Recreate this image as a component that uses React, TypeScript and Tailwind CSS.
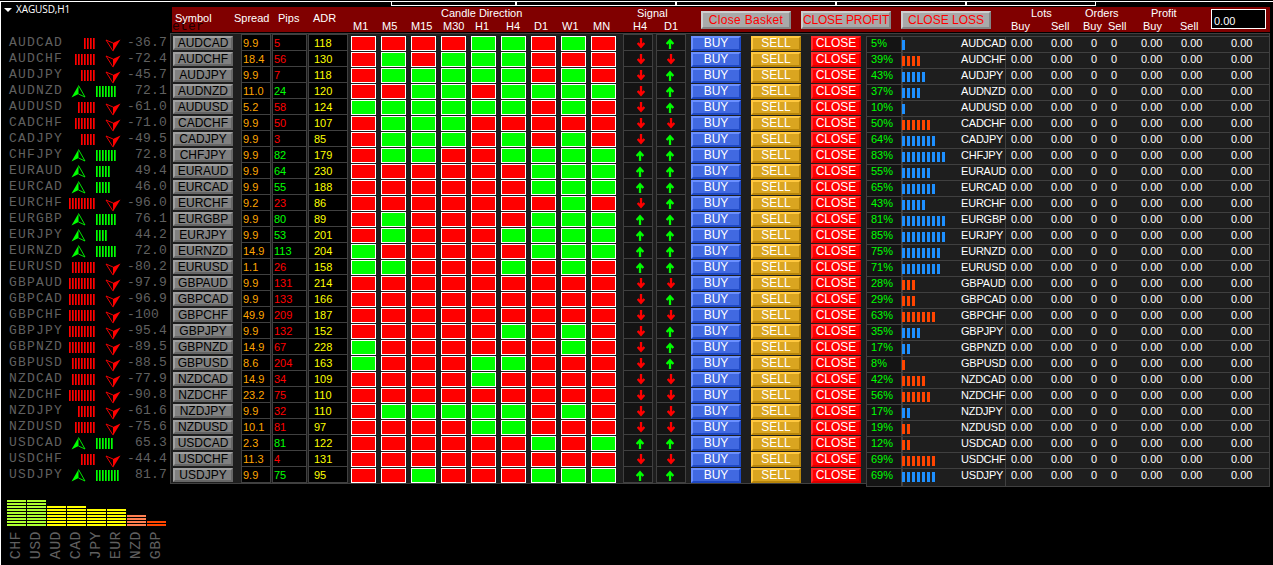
type Row = [
  symbol: string,
  strength: string,
  ticks: number,
  spread: string,
  pips: string,
  adr: string,
  candles: string,
  signals: string,
  percent: number,
  side: "B" | "S",
]

// candles: M1..MN, R = bearish, G = bullish. signals: H4 and D1, u = up, d = down
const rows: Row[] = [
  ["AUDCAD", "-36.7", 4, "9.9", "5", "118", "RRRRGGRGR", "du", 5, "B"],
  ["AUDCHF", "-72.4", 7, "18.4", "56", "130", "RGRGGGRRR", "dd", 39, "S"],
  ["AUDJPY", "-45.7", 5, "9.9", "7", "118", "RGGGGGRGR", "du", 43, "B"],
  ["AUDNZD", "72.1", 7, "11.0", "24", "120", "RRGGRGGGG", "du", 37, "B"],
  ["AUDUSD", "-61.0", 6, "5.2", "58", "124", "GGGGGGRGR", "du", 9.9, "B"],
  ["CADCHF", "-71.0", 7, "9.9", "50", "107", "RGGGRRRRR", "dd", 50, "S"],
  ["CADJPY", "-49.5", 5, "9.9", "3", "85", "RGGGRGRGR", "du", 64, "B"],
  ["CHFJPY", "72.8", 7, "9.9", "82", "179", "RGGRRGGGG", "uu", 83, "B"],
  ["EURAUD", "49.4", 5, "9.9", "64", "230", "RRRRRRGGG", "uu", 55, "B"],
  ["EURCAD", "46.0", 5, "9.9", "55", "188", "RRRRRRGGG", "uu", 65, "B"],
  ["EURCHF", "-96.0", 9, "9.2", "23", "86", "RRRRRRRGR", "du", 43, "B"],
  ["EURGBP", "76.1", 7, "9.9", "80", "89", "RGRRRRGGG", "uu", 81, "B"],
  ["EURJPY", "44.2", 4, "9.9", "53", "201", "RGRRRGGGG", "uu", 85, "B"],
  ["EURNZD", "72.0", 7, "14.9", "113", "204", "GRRRRRGGG", "uu", 75, "B"],
  ["EURUSD", "-80.2", 8, "1.1", "26", "158", "GGRRRGRGR", "uu", 71, "B"],
  ["GBPAUD", "-97.9", 9, "9.9", "131", "214", "RRRRRRRRR", "dd", 28, "S"],
  ["GBPCAD", "-96.9", 9, "9.9", "133", "166", "RRRRRRRRR", "du", 29, "S"],
  ["GBPCHF", "-100", 9, "49.9", "209", "187", "RRRRRRRRR", "dd", 63, "S"],
  ["GBPJPY", "-95.4", 9, "9.9", "132", "152", "RRRRRGRGR", "du", 35, "B"],
  ["GBPNZD", "-89.5", 9, "14.9", "67", "228", "GRRRRRRGR", "du", 17, "B"],
  ["GBPUSD", "-88.5", 8, "8.6", "204", "163", "GRRRGGRRR", "du", 8, "S"],
  ["NZDCAD", "-77.9", 8, "14.9", "34", "109", "RRRRGRRRR", "dd", 42, "S"],
  ["NZDCHF", "-90.8", 9, "23.2", "75", "110", "RRRRRRRRR", "dd", 56, "S"],
  ["NZDJPY", "-61.6", 6, "9.9", "32", "110", "RGGGGGRGR", "dd", 17, "B"],
  ["NZDUSD", "-75.6", 7, "10.1", "81", "97", "RRRRGGRRR", "dd", 19, "S"],
  ["USDCAD", "65.3", 6, "2.3", "81", "122", "RRRRRRGRG", "uu", 12, "S"],
  ["USDCHF", "-44.4", 5, "11.3", "4", "131", "RRRRRRRRR", "dd", 69, "S"],
  ["USDJPY", "81.7", 8, "9.9", "75", "95", "RRGRRRGGG", "uu", 69, "B"],
]

const currencies = [
  { name: "CHF", level: 9, color: "bg-[#adff2f]" },
  { name: "USD", level: 9, color: "bg-[#adff2f]" },
  { name: "AUD", level: 7, color: "bg-[#ffff00]" },
  { name: "CAD", level: 7, color: "bg-[#ffff00]" },
  { name: "JPY", level: 6, color: "bg-[#ffff00]" },
  { name: "EUR", level: 6, color: "bg-[#ffff00]" },
  { name: "NZD", level: 4, color: "bg-[#ff7f50]" },
  { name: "GBP", level: 2, color: "bg-[#ff4500]" },
]

const timeframes = [
  { label: "M1", width: "w-[29px]" },
  { label: "M5", width: "w-[29px]" },
  { label: "M15", width: "w-8" },
  { label: "M30", width: "w-8" },
  { label: "H1", width: "w-[31px]" },
  { label: "H4", width: "w-7" },
  { label: "D1", width: "w-7" },
  { label: "W1", width: "w-[31px]" },
  { label: "MN", width: "w-[39px]" },
]

const range = (n: number) => Array.from({ length: n }, (_, i) => i)

const actionButton = "mt-px h-[15px] w-[50px] shrink-0 border-2 text-center text-[12px] leading-[11px] text-white"
const closeButton =
  "mt-1 h-[18px] w-[90px] shrink-0 whitespace-nowrap border-2 border-t-[#cfcfcf] border-l-[#cfcfcf] border-r-[#858585] border-b-[#858585] bg-[#a9a9a9] text-[12px] leading-[15px] text-[#ff0000] flex justify-center"
const cell = "-mt-px h-[17px] shrink-0 border border-[#404040] leading-[16px]"

function Wing({ up }: { up: boolean }) {
  return up ? (
    <svg width="15" height="13" viewBox="0 0 15 13" className="shrink-0">
      <path d="M7.5 .5V9L.5 12.5Z" fill="#00ff00" />
      <path d="M7.5 .5L14 12L7.5 9" fill="none" stroke="#00ff00" strokeWidth=".9" />
    </svg>
  ) : (
    <svg width="16" height="13" viewBox="0 0 16 13" className="shrink-0">
      <path d="M8 12.5V4L15.5 .5Z" fill="#ff0000" />
      <path d="M8 12L1 1L8 4" fill="none" stroke="#ff0000" strokeWidth=".9" />
    </svg>
  )
}

function Ticks({ count, up }: { count: number; up: boolean }) {
  return (
    <div className="mt-0.5 flex shrink-0 gap-px">
      {range(count).map((i) => (
        <span key={i} className={`h-[11px] w-0.5 border-r ${up ? "border-[#00b000] bg-[#00ff00]" : "border-[#b00000] bg-[#ff0000]"}`} />
      ))}
    </div>
  )
}

function SignalArrow({ up }: { up: boolean }) {
  return up ? (
    <svg width="8" height="11" viewBox="0 0 8 11" className="mt-[3px]">
      <path d="M4 11V2M.7 6L4 2.2L7.3 6" fill="none" stroke="#00ff00" strokeWidth="2.3" />
    </svg>
  ) : (
    <svg width="8" height="11" viewBox="0 0 8 11" className="mt-[3px] ml-px">
      <path d="M4 0V9M.7 5L4 8.8L7.3 5" fill="none" stroke="#ff0000" strokeWidth="2.3" />
    </svg>
  )
}

function StrengthList() {
  return (
    <div className="w-[169px] shrink-0 pt-[3px] font-['Liberation_Mono',monospace] text-[13px] leading-[14px] text-[#606060]">
      {rows.map(([symbol, strength, ticks]) => {
        const up = !strength.startsWith("-")
        return (
          <div key={symbol} className="flex h-4 pl-2">
            <span className="w-[59px] shrink-0 tracking-[1.2px]">{symbol}</span>
            {up ? (
              <div className="flex w-[59px] shrink-0 pl-[3px]">
                <div className="mt-px w-[25px]">
                  <Wing up />
                </div>
                <Ticks count={ticks} up />
              </div>
            ) : (
              <div className="flex w-[59px] shrink-0 justify-end pr-[6px]">
                <Ticks count={ticks} up={false} />
                <div className="mt-[3px] ml-[10px] w-4">
                  <Wing up={false} />
                </div>
              </div>
            )}
            <span className="tracking-[0.2px] whitespace-pre">{up ? " " + strength : strength}</span>
          </div>
        )
      })}
    </div>
  )
}

function Header() {
  return (
    <header className="relative ml-[171px] flex h-[25px] w-[1098px] bg-[#800000] text-[11px] leading-[13px] whitespace-nowrap text-white">
      {/* tail of the meter caption, half hidden under the header */}
      <span className="absolute top-[14px] left-0 font-['Liberation_Mono',monospace] text-[13px] leading-[11px] tracking-[0.2px] text-[#1a0000]">
        eter
      </span>
      <div className="relative flex w-[181px] shrink-0 pt-[5px] pl-[3px]">
        <span className="w-[59px]">Symbol</span>
        <span className="w-11">Spread</span>
        <span className="w-[35px]">Pips</span>
        <span>ADR</span>
      </div>
      <div className="w-[280px] shrink-0">
        <div className="pl-[88px]">Candle Direction</div>
        <div className="flex">
          {timeframes.map((t) => (
            <span key={t.label} className={`${t.width} shrink-0`}>
              {t.label}
            </span>
          ))}
        </div>
      </div>
      <div className="w-[68px] shrink-0">
        <div className="pl-1">Signal</div>
        <div className="flex">
          <span className="w-[31px]">H4</span>
          <span>D1</span>
        </div>
      </div>
      <div className="flex w-[310px] shrink-0 gap-2.5">
        <button className={`${closeButton} tracking-[0.3px]`}>Close Basket</button>
        <button className={`${closeButton} tracking-[-0.15px]`}>CLOSE PROFIT</button>
        <button className={closeButton}>CLOSE LOSS</button>
      </div>
      <div className="w-[72px] shrink-0">
        <div className="pl-5">Lots</div>
        <div className="flex">
          <span className="w-10">Buy</span>
          <span>Sell</span>
        </div>
      </div>
      <div className="w-[60px] shrink-0">
        <div className="pl-[2px]">Orders</div>
        <div className="flex">
          <span className="w-[25px]">Buy</span>
          <span>Sell</span>
        </div>
      </div>
      <div className="w-[68px] shrink-0">
        <div className="pl-2">Profit</div>
        <div className="flex">
          <span className="w-[37px]">Buy</span>
          <span>Sell</span>
        </div>
      </div>
      <div className="mt-0.5 h-5 w-[55px] shrink-0 border border-white bg-black pl-0.5 leading-[23px]">0.00</div>
    </header>
  )
}

function SymbolRow({ row }: { row: Row }) {
  const [symbol, strength, , spread, pips, adr, candles, signals] = row
  const up = !strength.startsWith("-")
  return (
    <div className="flex h-4 items-start">
      <button className="mt-px mr-2 ml-0.5 h-[14px] w-[60px] shrink-0 border-2 border-t-[#a0a0a0] border-r-[#666] border-b-[#666] border-l-[#a0a0a0] bg-[#808080] text-center text-[12px] leading-[11px] text-black">
        {symbol}
      </button>
      <div className={`${cell} w-[30px] bg-black pl-px text-[#ffa500]`}>{spread}</div>
      <div className={`${cell} ml-px w-[35px] bg-black pl-px ${up ? "text-[#00ff00]" : "text-[#ff0000]"}`}>{pips}</div>
      <div className={`${cell} ml-px w-10 bg-black pl-[5px] text-[#ffff00]`}>{adr}</div>
      <div className="mt-px ml-[3px] flex w-[272px] shrink-0 gap-[5px]">
        {candles.split("").map((c, i) => (
          <span key={i} className={`h-[15px] w-[25px] border border-white ${c === "G" ? "bg-[#00ff00]" : "bg-[#ff0000]"}`} />
        ))}
      </div>
      <div className={`${cell} w-[30px] bg-[#141414] pl-3`}>
        <SignalArrow up={signals[0] === "u"} />
      </div>
      <div className={`${cell} ml-[3px] w-[30px] bg-[#141414] pl-[9px]`}>
        <SignalArrow up={signals[1] === "u"} />
      </div>
      <div className="ml-[5px] flex gap-2.5">
        <button className={`${actionButton} border-t-[#6a8fff] border-r-[#1f49c4] border-b-[#1f49c4] border-l-[#6a8fff] bg-[#4169e1]`}>BUY</button>
        <button className={`${actionButton} border-t-[#ffc840] border-r-[#b8860b] border-b-[#b8860b] border-l-[#ffc840] bg-[#daa520]`}>SELL</button>
        <button className={`${actionButton} border-t-[#ff2a2a] border-r-[#dc0000] border-b-[#dc0000] border-l-[#ff2a2a] bg-[#ff0000]`}>CLOSE</button>
      </div>
    </div>
  )
}

function ExposureRow({ row }: { row: Row }) {
  const [symbol, , , , , , , , percent, side] = row
  return (
    <div className="flex h-4 border-b border-[#404040] leading-[12px] last:h-[17px] last:border-b-0">
      <div className="w-9 shrink-0 border-r-2 border-[#404040] bg-[#141414] pl-1 text-[#00ff00]">{Math.round(percent)}%</div>
      <div className="-ml-px flex w-[59px] shrink-0 gap-0.5 pt-[3px]">
        {range(Math.floor(percent / 10) + 1).map((i) => (
          <span key={i} className={`h-2.5 w-[3px] ${side === "B" ? "bg-[#1e90ff]" : "bg-[#ff4500]"}`} />
        ))}
      </div>
      <div className="w-[45px] shrink-0 border-r border-[#404040] tracking-[-0.2px]">{symbol}</div>
      <span className="ml-[5px] w-10 shrink-0">0.00</span>
      <span className="w-10 shrink-0">0.00</span>
      <span className="w-5 shrink-0">0</span>
      <span className="w-[30px] shrink-0">0</span>
      <span className="w-10 shrink-0">0.00</span>
      <span className="w-[50px] shrink-0">0.00</span>
      <span>0.00</span>
    </div>
  )
}

function CurrencyMeter() {
  return (
    <div className="mt-4 ml-1.5 flex gap-px font-['Liberation_Mono',monospace] text-[15px] leading-[19px] text-[#606060]">
      {currencies.map((c) => (
        <div key={c.name} className="flex w-[19px] flex-col items-center">
          <div className="flex h-[26px] w-full flex-col justify-end gap-px">
            {range(c.level).map((i) => (
              <span key={i} className={`h-0.5 w-full shrink-0 ${c.color}`} />
            ))}
          </div>
          <span className="mt-[5px] rotate-180 tracking-[0.4px] [writing-mode:vertical-rl]">{c.name}</span>
        </div>
      ))}
    </div>
  )
}

export default function App() {
  return (
    <div className="h-[565px] w-[1273px] overflow-hidden bg-black pt-px font-['Liberation_Sans',Arial,sans-serif]">
      <div className="relative h-[564px] border-t border-l border-white">
        {/* chart title, sits over the left corner */}
        <div className="absolute top-0 left-[3px] flex items-center gap-1 font-['Open_Sans',sans-serif] text-[10px] leading-[14px] text-white">
          <svg width="8" height="4" viewBox="0 0 8 4" className="mt-px">
            <path d="M0 0H8L4 4Z" fill="#fff" />
          </svg>
          <span className="tracking-[-0.1px]">XAGUSD,H1</span>
        </div>
        <div className="ml-[390px] flex h-1 w-[705px] border-r border-b border-l border-white">
          <span className="w-[125px] border-r-2 border-white" />
          <span className="w-40 border-r-2 border-white" />
          <span className="w-40 border-r-2 border-white" />
          <span className="w-[130px] border-r-2 border-white" />
        </div>
        <div className="h-px" />
        <Header />
        <div className="mt-px flex">
          <StrengthList />
          <div className="flex h-[451px] w-[1100px] shrink-0 border border-[#404040] bg-[#1e1e1e] text-[11px] whitespace-nowrap text-white">
            <div className="w-[695px] shrink-0 pt-px">
              {rows.map((row) => (
                <SymbolRow key={row[0]} row={row} />
              ))}
            </div>
            <div className="mt-0.5 -mr-px h-[451px] w-[404px] shrink-0 border border-[#404040] bg-[#1e1e1e]">
              {rows.map((row) => (
                <ExposureRow key={row[0]} row={row} />
              ))}
            </div>
          </div>
        </div>
        <CurrencyMeter />
      </div>
    </div>
  )
}
